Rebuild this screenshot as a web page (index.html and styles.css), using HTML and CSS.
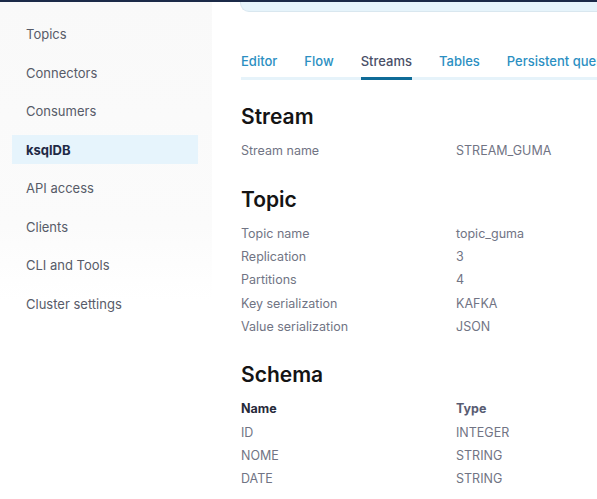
FILE: index.html
```html
<!DOCTYPE html>
<html>
<head>
<meta charset="utf-8">
<link rel="stylesheet" href="styles.css">
</head>
<body>
<div class="topbar"></div>
<div class="layout">
  <nav class="sidebar">
    <a class="nav-item">Topics</a>
    <a class="nav-item">Connectors</a>
    <a class="nav-item">Consumers</a>
    <a class="nav-item active">ksqlDB</a>
    <a class="nav-item">API access</a>
    <a class="nav-item">Clients</a>
    <a class="nav-item">CLI and Tools</a>
    <a class="nav-item">Cluster settings</a>
  </nav>
  <main class="main">
    <div class="banner"></div>
    <div class="tabs">
      <span class="tab">Editor</span>
      <span class="tab">Flow</span>
      <span class="tab active">Streams</span>
      <span class="tab">Tables</span>
      <span class="tab">Persistent queries</span>
    </div>
    <section class="section first">
      <h2>Stream</h2>
      <div class="row"><span class="label">Stream name</span><span class="value">STREAM_GUMA</span></div>
    </section>
    <section class="section">
      <h2>Topic</h2>
      <div class="row"><span class="label">Topic name</span><span class="value">topic_guma</span></div>
      <div class="row"><span class="label">Replication</span><span class="value">3</span></div>
      <div class="row"><span class="label">Partitions</span><span class="value">4</span></div>
      <div class="row"><span class="label">Key serialization</span><span class="value">KAFKA</span></div>
      <div class="row"><span class="label">Value serialization</span><span class="value">JSON</span></div>
    </section>
    <section class="section">
      <h2>Schema</h2>
      <div class="row head"><span class="label">Name</span><span class="value">Type</span></div>
      <div class="row"><span class="label">ID</span><span class="value">INTEGER</span></div>
      <div class="row"><span class="label">NOME</span><span class="value">STRING</span></div>
      <div class="row"><span class="label">DATE</span><span class="value">STRING</span></div>
    </section>
  </main>
</div>
</body>
</html>
```
FILE: styles.css
```css
* { box-sizing: border-box; }
html, body {
  margin: 0;
  padding: 0;
  background: #fff;
  font-family: Inter, "Noto Sans", sans-serif;
  overflow: hidden;
}
body { width: 597px; height: 499px; }
.topbar {
  height: 2px;
  background: #1b2a48;
}
.layout {
  display: flex;
  height: 497px;
}
.sidebar {
  width: 212px;
  flex: none;
  background: linear-gradient(to bottom, #f9f9f9 0%, #fbfbfb 45%, #ffffff 60%);
  display: flex;
  flex-direction: column;
  gap: 9.5px;
  padding: 17.5px 14px 0 12px;
}
.nav-item {
  display: flex;
  align-items: center;
  height: 29px;
  padding-left: 14px;
  font-size: 13px;
  color: #575b68;
}
.nav-item.active {
  background: #e6f4fc;
  color: #1f2a45;
  font-weight: 700;
}
.main {
  flex: 1;
  min-width: 0;
  padding-left: 29px;
  display: flex;
  flex-direction: column;
}
.banner {
  height: 10px;
  margin-left: -1px;
  background: #e6f4fb;
  border: 1px solid #d9e7ef;
  border-top: none;
  border-right: none;
  border-bottom-left-radius: 9px;
}
.tabs {
  margin-top: 41px;
  display: flex;
  gap: 27px;
  border-bottom: 3px solid #e6f3fa;
  white-space: nowrap;
}
.tab {
  font-size: 13px;
  font-weight: 500;
  line-height: 16px;
  padding-bottom: 8px;
  margin-bottom: -3px;
  border-bottom: 3px solid transparent;
  color: #2b8fc2;
}
.tab.active {
  color: #4a5068;
  border-bottom-color: #0f6b97;
}
.section { margin-top: 23.4px; }
.section.first { margin-top: 23px; }
h2 {
  margin: 0 0 8px;
  font-size: 21px;
  line-height: 28px;
  font-weight: 600;
  color: #141414;
}
.row {
  display: flex;
  height: 23.25px;
  align-items: center;
  font-size: 12.5px;
  color: #717484;
}
.label { width: 215px; flex: none; }
.row.head { font-weight: 700; }
.row.head .label { color: #272a3a; }
.row.head .value { color: #585c72; }
```
